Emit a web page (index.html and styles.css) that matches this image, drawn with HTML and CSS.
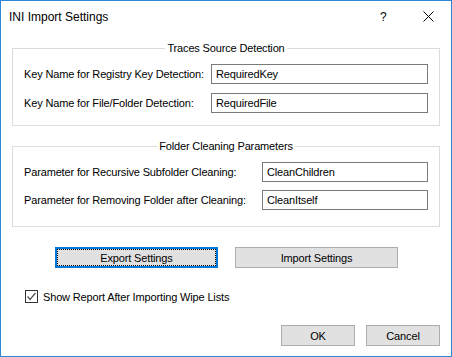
FILE: index.html
```html
<!DOCTYPE html>
<html>
  <head>
    <meta charset="utf-8">
    <title>INI Import Settings</title>
    <link rel="stylesheet" href="styles.css">
  </head>
  <body>
    <div class="window">
      <div class="titlebar">
        <span class="title">INI Import Settings</span>
        <span class="help">?</span>
        <svg class="close" width="11" height="11" viewBox="0 0 11 11">
          <path d="M0.5 0.5 L10.5 10.5 M10.5 0.5 L0.5 10.5" stroke="#000" stroke-width="1" fill="none"/>
        </svg>
      </div>
      <div class="content">
        <fieldset class="group group_traces">
          <legend>Traces Source Detection</legend>
          <div class="row row_wide">
            <label>Key Name for Registry Key Detection:</label>
            <input type="text" value="RequiredKey">
          </div>
          <div class="row row_wide">
            <label>Key Name for File/Folder Detection:</label>
            <input type="text" value="RequiredFile">
          </div>
        </fieldset>
        <fieldset class="group group_folder">
          <legend>Folder Cleaning Parameters</legend>
          <div class="row row_narrow">
            <label>Parameter for Recursive Subfolder Cleaning:</label>
            <input type="text" value="CleanChildren">
          </div>
          <div class="row row_narrow">
            <label>Parameter for Removing Folder after Cleaning:</label>
            <input type="text" value="CleanItself">
          </div>
        </fieldset>
        <div class="settings_buttons">
          <button class="btn btn_wide btn_focus">Export Settings</button>
          <button class="btn btn_wide">Import Settings</button>
        </div>
        <label class="check">
          <span class="checkbox">
            <svg width="11" height="11" viewBox="0 0 11 11">
              <path d="M1.5 5.5 L4 8.5 L9.5 2" stroke="#555" stroke-width="1.3" fill="none"/>
            </svg>
          </span>
          Show Report After Importing Wipe Lists
        </label>
        <div class="footer">
          <button class="btn btn_small">OK</button>
          <button class="btn btn_small">Cancel</button>
        </div>
      </div>
    </div>
  </body>
</html>
```

FILE: styles.css
```css
body {
  margin: 0;
  font-family: 'Liberation Sans', Arial, sans-serif;
  font-size: 11px;
  letter-spacing: -0.15px;
  color: #000;
  background: #fff;
}

.window {
  width: 452px;
  height: 357px;
  box-sizing: border-box;
  border: 1px solid #2b88d8;
  background: #fff;
  display: flex;
  flex-direction: column;
}

.titlebar {
  height: 30px;
  display: flex;
  align-items: center;
  padding-left: 8px;
  font-size: 12px;
  letter-spacing: 0;
}

.title {
  flex: 1;
  margin-top: 1px;
}

.help {
  width: 12px;
  margin-right: 31px;
  margin-top: 1px;
}

.close {
  margin-right: 17px;
  margin-top: 1px;
}

.content {
  display: flex;
  flex-direction: column;
  padding: 10px 11px 0 11px;
}

.group {
  margin: 0;
  border: 1px solid #dcdcdc;
  padding: 8px 11px 12px 11px;
  display: flex;
  flex-direction: column;
  gap: 9px;
}

.group legend {
  margin: 0 auto;
  padding: 0 2px;
  line-height: 15px;
}

.group_folder {
  margin-top: 13px;
  gap: 8px;
  padding-bottom: 16px;
}

.row {
  display: grid;
  align-items: center;
}

.row_wide {
  grid-template-columns: 1fr 217px;
}

.row_narrow {
  grid-template-columns: 1fr 166px;
}

.row input {
  height: 20px;
  box-sizing: border-box;
  border: 1px solid #7a7a7a;
  padding: 0 4px;
  font-family: inherit;
  font-size: 11px;
  letter-spacing: -0.15px;
  color: #000;
  background: #fff;
  outline: none;
}

.settings_buttons {
  display: flex;
  gap: 17px;
  margin-top: 20px;
  padding-left: 43px;
}

.btn {
  height: 21px;
  box-sizing: border-box;
  border: 1px solid #adadad;
  background: #e1e1e1;
  font-family: inherit;
  font-size: 11px;
  letter-spacing: -0.15px;
  color: #000;
  padding: 0;
}

.btn_wide {
  width: 163px;
}

.btn_focus {
  border: 2px solid #0078d7;
  outline: 1px dotted #000;
  outline-offset: -3px;
}

.btn_small {
  width: 74px;
}

.check {
  display: flex;
  align-items: center;
  gap: 5px;
  margin-top: 22px;
  padding-left: 13px;
  height: 13px;
}

.checkbox {
  width: 13px;
  height: 13px;
  box-sizing: border-box;
  border: 1px solid #333;
  background: #fff;
  display: flex;
  align-items: center;
  justify-content: center;
}

.footer {
  display: flex;
  justify-content: flex-end;
  gap: 11px;
  margin-top: 22px;
}
```
